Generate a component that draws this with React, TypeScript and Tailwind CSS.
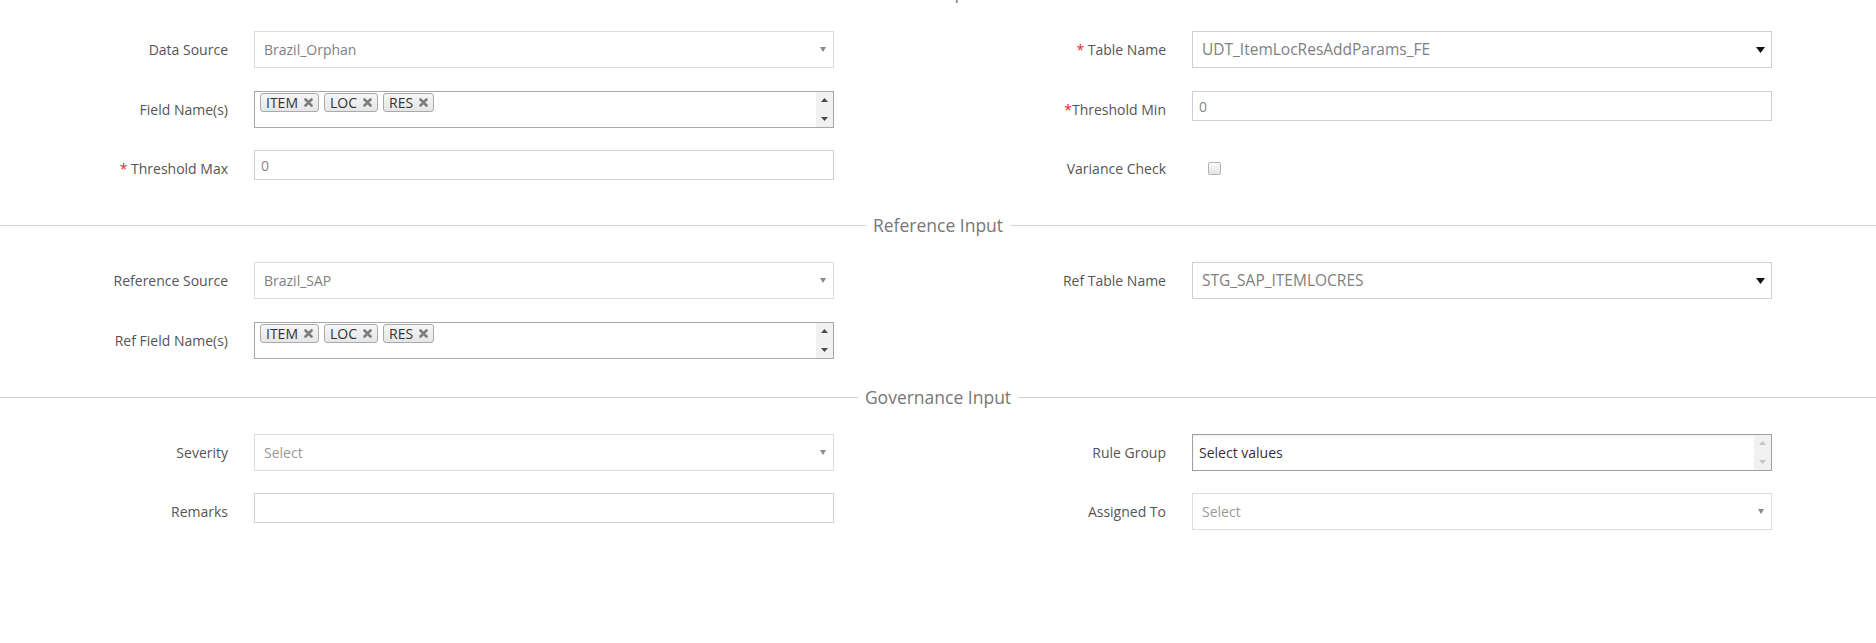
import type { ReactNode } from "react";

function Legend({ title, className = "" }: { title: string; className?: string }) {
  return (
    <div className={`flex h-[30px] items-center ${className}`}>
      <div className="h-px flex-1 bg-[#d3d3d3]" />
      <span className="px-[7px] text-[17.5px] leading-[30px] text-[#777]">{title}</span>
      <div className="h-px flex-1 bg-[#d3d3d3]" />
    </div>
  );
}

function Field({
  label,
  req,
  tight,
  children,
}: {
  label?: string;
  req?: boolean;
  tight?: boolean;
  children?: ReactNode;
}) {
  if (!label) return <div />;
  return (
    <div className="flex items-start">
      <div className="w-[228px] shrink-0 pt-[9px] text-right text-[14px] leading-5 text-[#555]">
        {req && <span className="text-[#e8262a]">*{tight ? "" : " "}</span>}
        {label}
      </div>
      <div className="ml-[26px] w-[580px]">{children}</div>
    </div>
  );
}

function Select({ value, placeholder }: { value: string; placeholder?: boolean }) {
  return (
    <div className="flex h-[37px] items-center justify-between border border-[#dcdcdc] bg-white pl-[9px] pr-[7px]">
      <span className={`text-[14px] ${placeholder ? "text-[#999]" : "text-[#808080]"}`}>{value}</span>
      <svg width="6" height="5" viewBox="0 0 6 5">
        <path d="M0 0h6L3 5z" fill="#8a8a8a" />
      </svg>
    </div>
  );
}

function TableSelect({ value }: { value: string }) {
  return (
    <div className="flex h-[37px] items-center justify-between border border-[#d0d0d0] bg-white pl-[9px] pr-[6px]">
      <span className="text-[15.5px] text-[#808080]">{value}</span>
      <svg width="9" height="6" viewBox="0 0 9 6">
        <path d="M0 0h9L4.5 6z" fill="#111" />
      </svg>
    </div>
  );
}

function TextInput({ value }: { value?: string }) {
  return (
    <div className="flex h-[30px] items-center border border-[#d0d0d0] bg-white pl-[6px] text-[14px] text-[#888]">
      {value}
    </div>
  );
}

function Scroller({ light }: { light?: boolean }) {
  const c = light ? "#c4c4c4" : "#4a4a4a";
  return (
    <div className="flex w-[17px] flex-col items-center justify-between bg-[#f1f1f1] py-[6px]">
      <svg width="7" height="4" viewBox="0 0 7 4">
        <path d="M0 4L3.5 0L7 4z" fill={c} />
      </svg>
      <svg width="7" height="4" viewBox="0 0 7 4">
        <path d="M0 0h7L3.5 4z" fill={c} />
      </svg>
    </div>
  );
}

function Chip({ text }: { text: string }) {
  return (
    <div className="flex h-[19px] items-center gap-[6px] rounded-[3px] border border-[#aaa] bg-gradient-to-b from-[#f6f6f6] to-[#e6e6e6] px-[5px] text-[14px] leading-none text-[#333]">
      <span>{text}</span>
      <svg width="9" height="9" viewBox="0 0 9 9">
        <path d="M1.5 1.5L7.5 7.5M7.5 1.5L1.5 7.5" stroke="#7d7d7d" strokeWidth="2.6" strokeLinecap="round" />
      </svg>
    </div>
  );
}

function TagBox({ tags }: { tags: string[] }) {
  return (
    <div className="flex h-[37px] border border-[#a8a8a8] bg-white">
      <div className="flex flex-1 items-start gap-[5px] pl-[5px] pt-[1px]">
        {tags.map((t) => (
          <Chip key={t} text={t} />
        ))}
      </div>
      <Scroller />
    </div>
  );
}

export default function App() {
  const tags = ["ITEM", "LOC", "RES"];
  return (
    <div className="h-[643px] w-full overflow-hidden bg-white font-['Open_Sans',sans-serif]">
      <Legend title="Main Input" className="-mt-[23px]" />

      <div className="mt-[24px] grid h-[60px] grid-cols-2">
        <Field label="Data Source">
          <Select value="Brazil_Orphan" />
        </Field>
        <Field label="Table Name" req>
          <TableSelect value="UDT_ItemLocResAddParams_FE" />
        </Field>
      </div>

      <div className="grid h-[59px] grid-cols-2">
        <Field label="Field Name(s)">
          <TagBox tags={tags} />
        </Field>
        <Field label="Threshold Min" req tight>
          <TextInput value="0" />
        </Field>
      </div>

      <div className="grid h-[60px] grid-cols-2">
        <Field label="Threshold Max" req>
          <TextInput value="0" />
        </Field>
        <Field label="Variance Check">
          <div className="ml-[16px] mt-[12px] h-[13px] w-[13px] rounded-[2px] border border-[#b5b5b5] bg-gradient-to-b from-[#fafafa] to-[#e4e4e4]" />
        </Field>
      </div>

      <Legend title="Reference Input" />

      <div className="mt-[22px] grid h-[60px] grid-cols-2">
        <Field label="Reference Source">
          <Select value="Brazil_SAP" />
        </Field>
        <Field label="Ref Table Name">
          <TableSelect value="STG_SAP_ITEMLOCRES" />
        </Field>
      </div>

      <div className="grid h-[60px] grid-cols-2">
        <Field label="Ref Field Name(s)">
          <TagBox tags={tags} />
        </Field>
        <Field />
      </div>

      <Legend title="Governance Input" />

      <div className="mt-[22px] grid h-[59px] grid-cols-2">
        <Field label="Severity">
          <Select value="Select" placeholder />
        </Field>
        <Field label="Rule Group">
          <div className="flex h-[37px] border border-[#a0a0a0] bg-white shadow-[inset_0_1px_2px_rgba(0,0,0,0.08)]">
            <div className="flex flex-1 items-center pl-[6px] text-[14px] text-[#333]">Select values</div>
            <Scroller light />
          </div>
        </Field>
      </div>

      <div className="grid h-[60px] grid-cols-2">
        <Field label="Remarks">
          <TextInput />
        </Field>
        <Field label="Assigned To">
          <Select value="Select" placeholder />
        </Field>
      </div>
    </div>
  );
}
